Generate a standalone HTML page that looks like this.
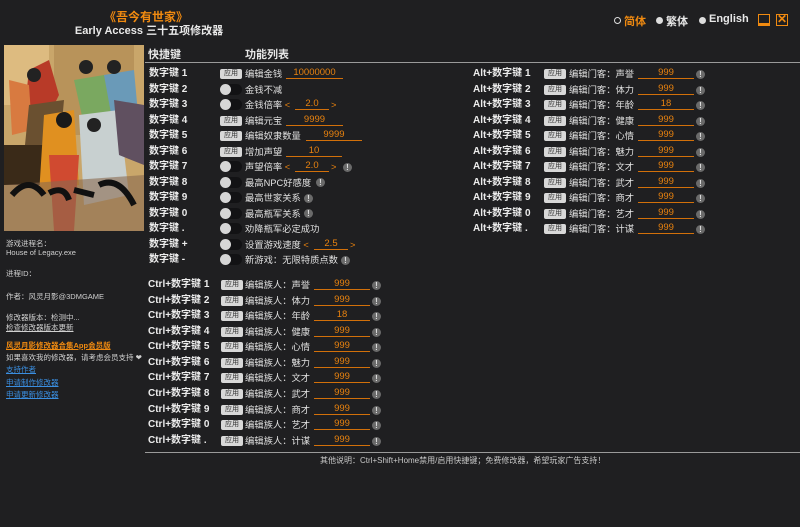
<!DOCTYPE html>
<html><head><meta charset="utf-8"><style>
*{margin:0;padding:0;box-sizing:border-box}
body{width:800px;height:527px;background:#1f1f21;font-family:"Liberation Sans","Noto Sans CJK SC",sans-serif;color:#e6e6e6;position:relative;overflow:hidden;font-size:10px}
.a{position:absolute;white-space:nowrap}
.k{font-weight:bold;font-size:10px;color:#ececec;height:16px;line-height:16px}
.t{font-size:9.3px;color:#e0e0e0;height:16px;line-height:16px}
.b{width:22px;height:10px;background:#d8d8d8;border-radius:2px;color:#333;font-size:7px;line-height:10px;text-align:center}
.tg{width:22px;height:11px;background:#121214;border-radius:6px}
.tg::before{content:"";position:absolute;left:0;top:0;width:11px;height:11px;border-radius:50%;background:#d6d6d6}
.in{height:12px;border-bottom:1px solid #d2700a;color:#e8820f;font-size:9.5px;line-height:12px;text-align:center}
.ex{width:9px;height:9px;border-radius:50%;background:#6a6a6a;color:#ddd;font-size:8px;line-height:9px;text-align:center;font-weight:bold}
.o{color:#e8820f}
.lk{color:#3a8ee0;text-decoration:underline;font-size:7.5px}
.s{font-size:7.5px;color:#d0d0d0}
</style></head><body>
<div class="a" style="left:0;width:292px;top:8px;text-align:center;color:#f08a10;font-weight:bold;font-size:12px">《吾今有世家》</div>
<div class="a" style="left:0;width:298px;top:22px;text-align:center;color:#e8e8e8;font-weight:bold;font-size:11px">Early Access 三十五项修改器</div>
<div class="a" style="left:614px;top:17px;width:7px;height:7px;border:1.5px solid #ddd;border-radius:50%"></div>
<div class="a" style="left:624px;top:13px;color:#f08a10;font-weight:bold;font-size:11px">简体</div>
<div class="a" style="left:656px;top:17px;width:7px;height:7px;background:#ddd;border-radius:50%"></div>
<div class="a" style="left:666px;top:13px;color:#e8e8e8;font-weight:bold;font-size:11px">繁体</div>
<div class="a" style="left:699px;top:17px;width:7px;height:7px;background:#ddd;border-radius:50%"></div>
<div class="a" style="left:709px;top:13px;color:#e8e8e8;font-weight:bold;font-size:11px">English</div>
<div class="a" style="left:758px;top:14px;width:12px;height:12px;border:1.5px solid #f08a10;border-bottom-width:3px"></div>
<div class="a" style="left:776px;top:14px;width:12px;height:12px;border:1.5px solid #f08a10;color:#f08a10;font-weight:bold;font-size:12px;line-height:9px;text-align:center">✕</div>

<svg class="a" style="left:4px;top:45px" width="140" height="186" viewBox="0 0 140 186">
<rect width="140" height="186" fill="#c9a66a"/>
<rect x="50" y="0" width="80" height="90" fill="#b8935a"/>
<rect x="0" y="0" width="45" height="60" fill="#ddbb80"/>
<path d="M25 25 L45 15 L55 50 L40 80 L20 70Z" fill="#b83a28"/>
<path d="M5 35 L25 40 L28 85 L8 90Z" fill="#d87a40"/>
<path d="M70 35 L100 30 L110 70 L80 80Z" fill="#7aa860"/>
<path d="M100 30 L130 25 L135 80 L110 85Z" fill="#6a9ab8"/>
<path d="M25 60 L60 55 L55 110 L20 110Z" fill="#6a5030"/>
<rect x="0" y="100" width="45" height="40" fill="#3a2a18"/>
<path d="M40 70 L70 65 L75 140 L35 150Z" fill="#e09020"/>
<path d="M75 70 L115 65 L125 150 L80 160Z" fill="#c8d0d0"/>
<path d="M110 55 L140 60 L140 120 L115 110Z" fill="#605060"/>
<path d="M45 110 L75 110 L70 186 L50 186Z" fill="#d04a30"/>
<path d="M0 140 L140 130 L140 186 L0 186Z" fill="#8a6a50" opacity=".6"/>
<path d="M8 150 Q25 130 40 150 M45 148 Q60 140 65 155 M70 145 L90 150 M95 140 Q115 130 130 160" stroke="#111" stroke-width="6" fill="none"/>
<circle cx="30" cy="30" r="7" fill="#222"/><circle cx="82" cy="22" r="7" fill="#222"/><circle cx="110" cy="22" r="7" fill="#222"/><circle cx="60" cy="75" r="8" fill="#1a1a1a"/><circle cx="90" cy="80" r="7" fill="#222"/>
</svg>

<div class="a s" style="left:6px;top:238px">游戏进程名：</div>
<div class="a s" style="left:6px;top:248px">House of Legacy.exe</div>
<div class="a s" style="left:6px;top:268px">进程ID：</div>
<div class="a s" style="left:6px;top:291px">作者：风灵月影@3DMGAME</div>
<div class="a s" style="left:6px;top:312px">修改器版本：检测中...</div>
<div class="a s" style="left:6px;top:322px;text-decoration:underline">检查修改器版本更新</div>
<div class="a" style="left:6px;top:340px;font-size:7.5px;color:#f08a10;font-weight:bold;text-decoration:underline">风灵月影修改器合集App会员版</div>
<div class="a s" style="left:6px;top:352px">如果喜欢我的修改器，请考虑会员支持 ❤</div>
<div class="a lk" style="left:6px;top:364px">支持作者</div>
<div class="a lk" style="left:6px;top:377px">申请制作修改器</div>
<div class="a lk" style="left:6px;top:389px">申请更新修改器</div>

<div class="a" style="left:148px;top:46px;font-weight:bold;font-size:11px">快捷键</div>
<div class="a" style="left:245px;top:46px;font-weight:bold;font-size:11px">功能列表</div>
<div class="a" style="left:145px;top:62px;width:655px;height:1px;background:#9a9a9a"></div>
<div class="a" style="left:145px;top:452px;width:655px;height:1px;background:#9a9a9a"></div>
<div class="a" style="left:320px;top:455px;font-size:8px;color:#c8c8c8">其他说明：Ctrl+Shift+Home禁用/启用快捷键；免费修改器，希望玩家广告支持！</div>

<div class="a k" style="left:149px;top:66px">数字键 1</div><div class="a b" style="left:220px;top:69px">应用</div><div class="a t" style="left:245px;top:66px">编辑金钱</div><div class="a in" style="left:286px;top:67px;width:57px">10000000</div>
<div class="a k" style="left:149px;top:82px">数字键 2</div><div class="a tg" style="left:220px;top:84px"></div><div class="a t" style="left:245px;top:82px">金钱不减</div>
<div class="a k" style="left:149px;top:97px">数字键 3</div><div class="a tg" style="left:220px;top:99px"></div><div class="a t" style="left:245px;top:97px">金钱倍率 <span class="o">&lt;</span></div><div class="a in" style="left:295px;top:98px;width:34px">2.0</div><div class="a t o" style="left:331px;top:97px">&gt;</div>
<div class="a k" style="left:149px;top:113px">数字键 4</div><div class="a b" style="left:220px;top:116px">应用</div><div class="a t" style="left:245px;top:113px">编辑元宝</div><div class="a in" style="left:286px;top:114px;width:57px">9999</div>
<div class="a k" style="left:149px;top:128px">数字键 5</div><div class="a b" style="left:220px;top:131px">应用</div><div class="a t" style="left:245px;top:128px">编辑奴隶数量</div><div class="a in" style="left:306px;top:129px;width:56px">9999</div>
<div class="a k" style="left:149px;top:144px">数字键 6</div><div class="a b" style="left:220px;top:147px">应用</div><div class="a t" style="left:245px;top:144px">增加声望</div><div class="a in" style="left:286px;top:145px;width:56px">10</div>
<div class="a k" style="left:149px;top:159px">数字键 7</div><div class="a tg" style="left:220px;top:161px"></div><div class="a t" style="left:245px;top:159px">声望倍率 <span class="o">&lt;</span></div><div class="a in" style="left:295px;top:160px;width:34px">2.0</div><div class="a t o" style="left:331px;top:159px">&gt;</div><div class="a ex" style="left:343px;top:163px">!</div>
<div class="a k" style="left:149px;top:175px">数字键 8</div><div class="a tg" style="left:220px;top:177px"></div><div class="a t" style="left:245px;top:175px">最高NPC好感度</div><div class="a ex" style="left:316px;top:178px">!</div>
<div class="a k" style="left:149px;top:190px">数字键 9</div><div class="a tg" style="left:220px;top:192px"></div><div class="a t" style="left:245px;top:190px">最高世家关系</div><div class="a ex" style="left:304px;top:194px">!</div>
<div class="a k" style="left:149px;top:206px">数字键 0</div><div class="a tg" style="left:220px;top:208px"></div><div class="a t" style="left:245px;top:206px">最高瓶军关系</div><div class="a ex" style="left:304px;top:209px">!</div>
<div class="a k" style="left:149px;top:221px">数字键 .</div><div class="a tg" style="left:220px;top:223px"></div><div class="a t" style="left:245px;top:221px">劝降瓶军必定成功</div>
<div class="a k" style="left:149px;top:237px">数字键 +</div><div class="a tg" style="left:220px;top:239px"></div><div class="a t" style="left:245px;top:237px">设置游戏速度 <span class="o">&lt;</span></div><div class="a in" style="left:314px;top:238px;width:34px">2.5</div><div class="a t o" style="left:350px;top:237px">&gt;</div>
<div class="a k" style="left:149px;top:252px">数字键 -</div><div class="a tg" style="left:220px;top:254px"></div><div class="a t" style="left:245px;top:252px">新游戏：无限特质点数</div><div class="a ex" style="left:341px;top:256px">!</div>

<div class="a k" style="left:148px;top:277px">Ctrl+数字键 1</div><div class="a b" style="left:221px;top:280px">应用</div><div class="a t" style="left:245px;top:277px">编辑族人：声誉</div><div class="a in" style="left:314px;top:278px;width:56px">999</div><div class="a ex" style="left:372px;top:281px">!</div>
<div class="a k" style="left:148px;top:293px">Ctrl+数字键 2</div><div class="a b" style="left:221px;top:296px">应用</div><div class="a t" style="left:245px;top:293px">编辑族人：体力</div><div class="a in" style="left:314px;top:294px;width:56px">999</div><div class="a ex" style="left:372px;top:297px">!</div>
<div class="a k" style="left:148px;top:308px">Ctrl+数字键 3</div><div class="a b" style="left:221px;top:311px">应用</div><div class="a t" style="left:245px;top:308px">编辑族人：年龄</div><div class="a in" style="left:314px;top:309px;width:56px">18</div><div class="a ex" style="left:372px;top:312px">!</div>
<div class="a k" style="left:148px;top:324px">Ctrl+数字键 4</div><div class="a b" style="left:221px;top:327px">应用</div><div class="a t" style="left:245px;top:324px">编辑族人：健康</div><div class="a in" style="left:314px;top:325px;width:56px">999</div><div class="a ex" style="left:372px;top:328px">!</div>
<div class="a k" style="left:148px;top:339px">Ctrl+数字键 5</div><div class="a b" style="left:221px;top:342px">应用</div><div class="a t" style="left:245px;top:339px">编辑族人：心情</div><div class="a in" style="left:314px;top:340px;width:56px">999</div><div class="a ex" style="left:372px;top:343px">!</div>
<div class="a k" style="left:148px;top:355px">Ctrl+数字键 6</div><div class="a b" style="left:221px;top:358px">应用</div><div class="a t" style="left:245px;top:355px">编辑族人：魅力</div><div class="a in" style="left:314px;top:356px;width:56px">999</div><div class="a ex" style="left:372px;top:359px">!</div>
<div class="a k" style="left:148px;top:370px">Ctrl+数字键 7</div><div class="a b" style="left:221px;top:373px">应用</div><div class="a t" style="left:245px;top:370px">编辑族人：文才</div><div class="a in" style="left:314px;top:371px;width:56px">999</div><div class="a ex" style="left:372px;top:374px">!</div>
<div class="a k" style="left:148px;top:386px">Ctrl+数字键 8</div><div class="a b" style="left:221px;top:389px">应用</div><div class="a t" style="left:245px;top:386px">编辑族人：武才</div><div class="a in" style="left:314px;top:387px;width:56px">999</div><div class="a ex" style="left:372px;top:390px">!</div>
<div class="a k" style="left:148px;top:402px">Ctrl+数字键 9</div><div class="a b" style="left:221px;top:405px">应用</div><div class="a t" style="left:245px;top:402px">编辑族人：商才</div><div class="a in" style="left:314px;top:403px;width:56px">999</div><div class="a ex" style="left:372px;top:406px">!</div>
<div class="a k" style="left:148px;top:417px">Ctrl+数字键 0</div><div class="a b" style="left:221px;top:420px">应用</div><div class="a t" style="left:245px;top:417px">编辑族人：艺才</div><div class="a in" style="left:314px;top:418px;width:56px">999</div><div class="a ex" style="left:372px;top:421px">!</div>
<div class="a k" style="left:148px;top:433px">Ctrl+数字键 .</div><div class="a b" style="left:221px;top:436px">应用</div><div class="a t" style="left:245px;top:433px">编辑族人：计谋</div><div class="a in" style="left:314px;top:434px;width:56px">999</div><div class="a ex" style="left:372px;top:437px">!</div>

<div class="a k" style="left:473px;top:66px">Alt+数字键 1</div><div class="a b" style="left:544px;top:69px">应用</div><div class="a t" style="left:569px;top:66px">编辑门客：声誉</div><div class="a in" style="left:638px;top:67px;width:56px">999</div><div class="a ex" style="left:696px;top:70px">!</div>
<div class="a k" style="left:473px;top:82px">Alt+数字键 2</div><div class="a b" style="left:544px;top:85px">应用</div><div class="a t" style="left:569px;top:82px">编辑门客：体力</div><div class="a in" style="left:638px;top:83px;width:56px">999</div><div class="a ex" style="left:696px;top:86px">!</div>
<div class="a k" style="left:473px;top:97px">Alt+数字键 3</div><div class="a b" style="left:544px;top:100px">应用</div><div class="a t" style="left:569px;top:97px">编辑门客：年龄</div><div class="a in" style="left:638px;top:98px;width:56px">18</div><div class="a ex" style="left:696px;top:101px">!</div>
<div class="a k" style="left:473px;top:113px">Alt+数字键 4</div><div class="a b" style="left:544px;top:116px">应用</div><div class="a t" style="left:569px;top:113px">编辑门客：健康</div><div class="a in" style="left:638px;top:114px;width:56px">999</div><div class="a ex" style="left:696px;top:117px">!</div>
<div class="a k" style="left:473px;top:128px">Alt+数字键 5</div><div class="a b" style="left:544px;top:131px">应用</div><div class="a t" style="left:569px;top:128px">编辑门客：心情</div><div class="a in" style="left:638px;top:129px;width:56px">999</div><div class="a ex" style="left:696px;top:132px">!</div>
<div class="a k" style="left:473px;top:144px">Alt+数字键 6</div><div class="a b" style="left:544px;top:147px">应用</div><div class="a t" style="left:569px;top:144px">编辑门客：魅力</div><div class="a in" style="left:638px;top:145px;width:56px">999</div><div class="a ex" style="left:696px;top:148px">!</div>
<div class="a k" style="left:473px;top:159px">Alt+数字键 7</div><div class="a b" style="left:544px;top:162px">应用</div><div class="a t" style="left:569px;top:159px">编辑门客：文才</div><div class="a in" style="left:638px;top:160px;width:56px">999</div><div class="a ex" style="left:696px;top:163px">!</div>
<div class="a k" style="left:473px;top:175px">Alt+数字键 8</div><div class="a b" style="left:544px;top:178px">应用</div><div class="a t" style="left:569px;top:175px">编辑门客：武才</div><div class="a in" style="left:638px;top:176px;width:56px">999</div><div class="a ex" style="left:696px;top:179px">!</div>
<div class="a k" style="left:473px;top:190px">Alt+数字键 9</div><div class="a b" style="left:544px;top:193px">应用</div><div class="a t" style="left:569px;top:190px">编辑门客：商才</div><div class="a in" style="left:638px;top:191px;width:56px">999</div><div class="a ex" style="left:696px;top:194px">!</div>
<div class="a k" style="left:473px;top:206px">Alt+数字键 0</div><div class="a b" style="left:544px;top:209px">应用</div><div class="a t" style="left:569px;top:206px">编辑门客：艺才</div><div class="a in" style="left:638px;top:207px;width:56px">999</div><div class="a ex" style="left:696px;top:210px">!</div>
<div class="a k" style="left:473px;top:221px">Alt+数字键 .</div><div class="a b" style="left:544px;top:224px">应用</div><div class="a t" style="left:569px;top:221px">编辑门客：计谋</div><div class="a in" style="left:638px;top:222px;width:56px">999</div><div class="a ex" style="left:696px;top:225px">!</div>
</body></html>
